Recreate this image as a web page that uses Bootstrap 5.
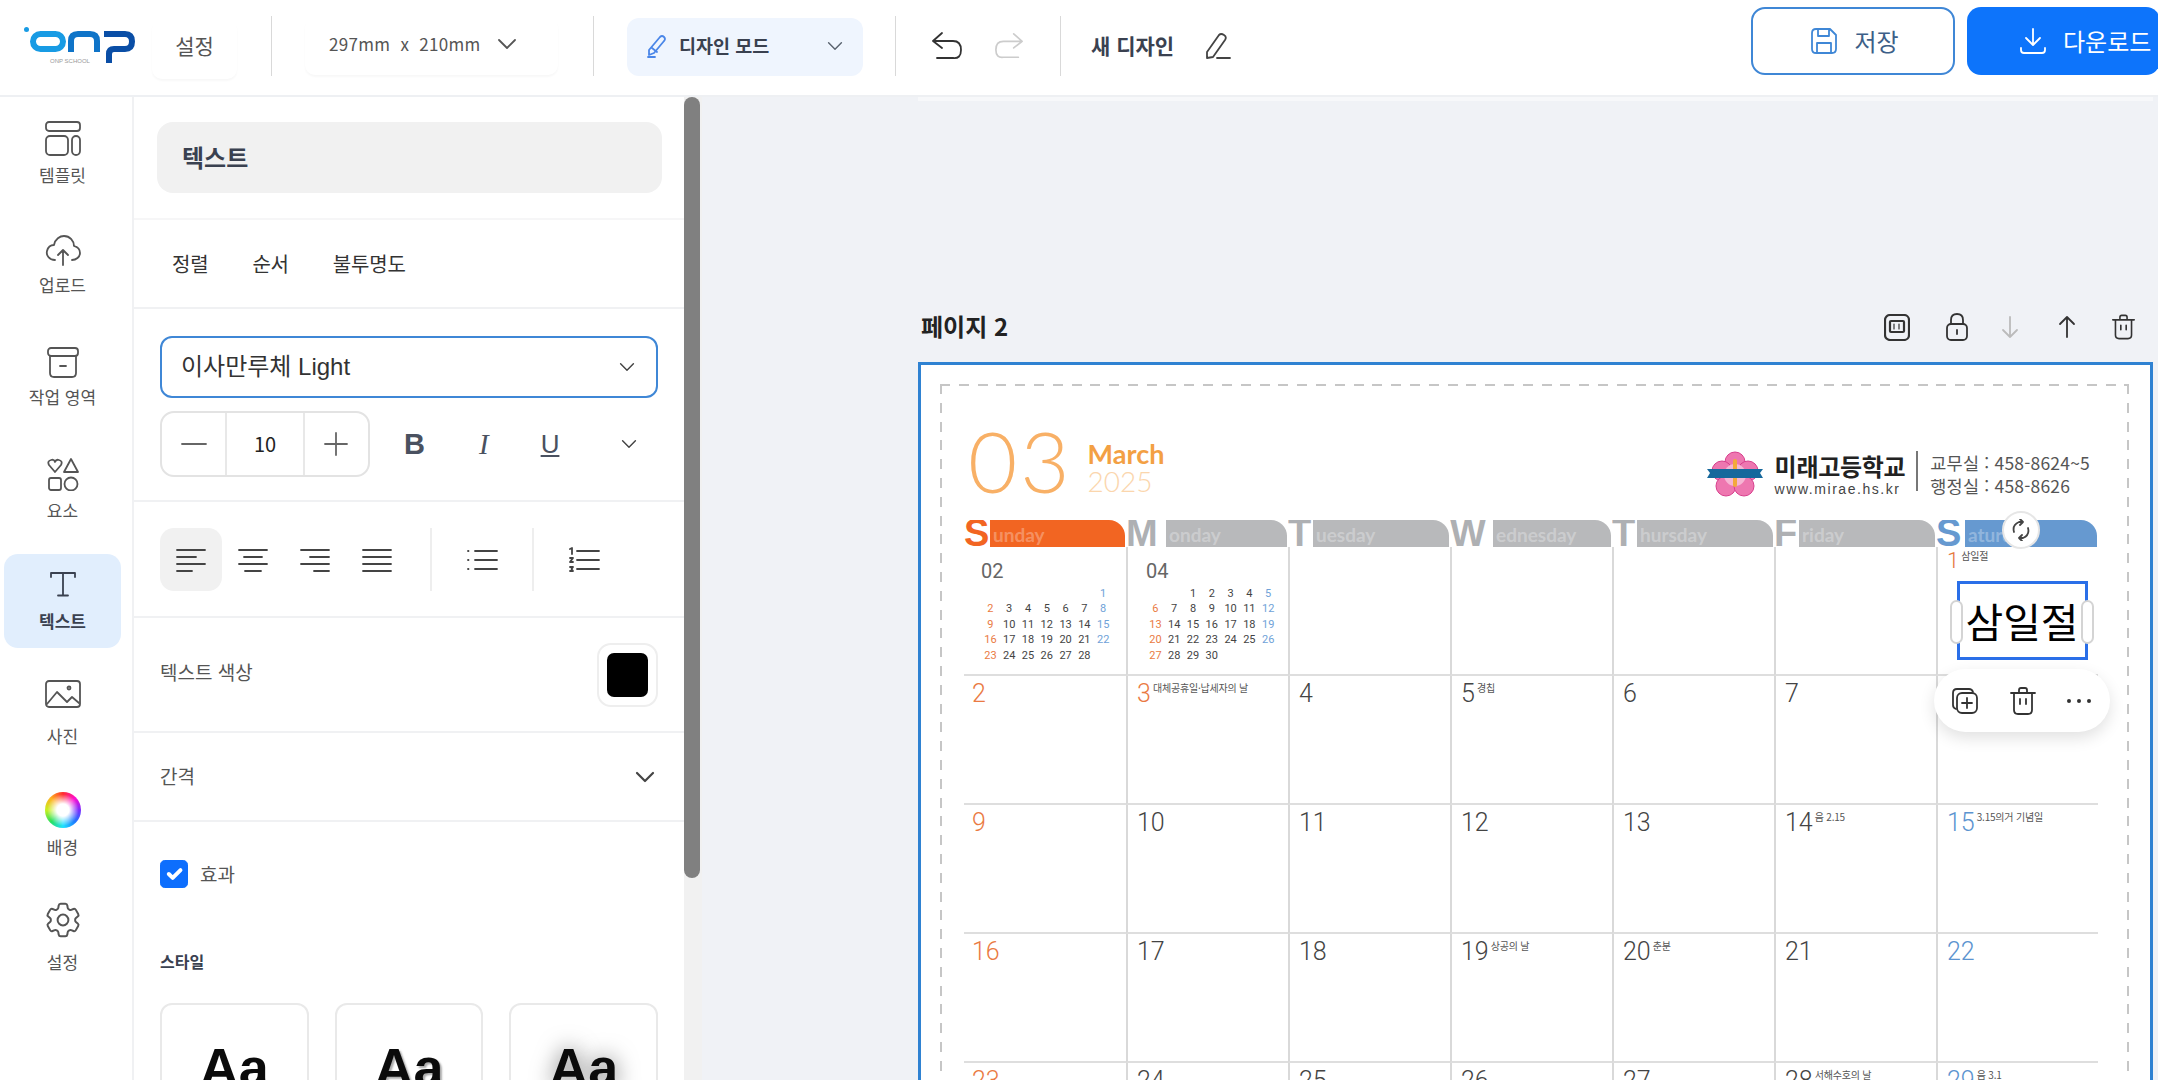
<!DOCTYPE html><html lang="ko">
<head>
  <meta charset="UTF-8" />
  <meta name="viewport" content="width=device-width, initial-scale=1.0" />
  <title>디자인 편집기</title>
  <link rel="stylesheet" href="https://cdn.jsdelivr.net/npm/bootstrap@5.3.0/dist/css/bootstrap.min.css" />
  <style>
    html, body { height: 100%; overflow: hidden; }
    body { font-family: "Noto Sans CJK KR", "Liberation Sans", sans-serif; color: #333; background: #fff; }
    svg { display: block; flex: none; }
    .ic { fill: none; stroke: currentColor; stroke-width: 1.8; stroke-linecap: round; stroke-linejoin: round; }

    /* top bar */
    .topbar { height: 97px; padding: 0 0 4px 24px; border-bottom: 2px solid #eef0f3; }
    .vline { width: 1px; height: 60px; background: #d9d9d9; flex: none; }
    .top-set { width: 85px; height: 60px; margin: 6px 34px 0 16px; padding-bottom: 6px; border-radius: 10px; box-shadow: 0 2px 2px rgba(0,0,0,.03); font-size: 21px; color: #555; }
    .top-size { width: 253px; height: 58px; margin: 0 35px 0 33px; padding: 0 0 4px 24px; border-radius: 10px; box-shadow: 0 2px 2px rgba(0,0,0,.03); font-size: 17px; color: #555; letter-spacing: .3px; }
    .top-mode { width: 236px; height: 58px; margin: 2px 32px 0 33px; padding: 0 20px 2px; border-radius: 12px; background: #eff5fe; font-size: 18.5px; font-weight: 700; color: #3a4150; }
    .top-title { margin: 0 30px 0 30px; font-size: 21px; font-weight: 700; color: #3a4150; }
    .btn-save, .btn-down { height: 68px; margin-bottom: 9px; border-radius: 14px; font-size: 24px; display: flex; align-items: center; justify-content: center; }
    .btn-save { width: 204px; margin-right: 12px; padding-left: 15px; border: 2px solid #3f87d6; color: #3d5f88; background: #fff; }
    .btn-save:hover { background: #fff; color: #3d5f88; border-color: #3f87d6; }
    .btn-down { width: 193px; margin-right: -2px; padding: 0 0 0 52px; justify-content: flex-start; background: #0d74fb; border: 0; color: #fff; white-space: nowrap; }

    /* left rail */
    .workarea { height: 983px; }
    .rail { width: 134px; border-right: 2px solid #f0f1f3; padding: 0 11px 0 4px; flex: none; }
    .rail-item { height: 112px; width: 117px; border-radius: 14px; color: #555; font-size: 17px; }
    .rail-item.on { background: #e1eefd; font-weight: 700; color: #3a4150; height: 94px; margin: 9px 0; justify-content: center; }
    .rail-item span { line-height: 22px; margin-top: 8px; white-space: nowrap; }
    .rail-item span.lab-far { margin-top: 13px; }
    .rail-item span.lab-photo { margin-top: 17px; }
    .wheel { width: 36px; height: 36px; border-radius: 50%; background: radial-gradient(circle, #fff 0 24%, rgba(255,255,255,0) 62%), conic-gradient(#ff2d2d, #ff0fd0, #7a2bff, #1d7bff, #1fe0ff, #28e060, #c8f020, #ffb020, #ff2d2d); }

    /* options panel */
    .panel { width: 550px; flex: none; overflow: hidden; }
    .sec { padding: 0 26px; border-bottom: 2px solid #f0f1f3; }
    .sec-title { height: 123px; padding: 25px 22px 0 23px; border-bottom-color: #f6f6f7; }
    .title-box { height: 71px; padding: 0 0 2px 25px; border-radius: 16px; background: #f1f1f1; font-size: 24px; font-weight: 700; color: #3a4150; }
    .sec-tabs { height: 89px; padding-left: 38px; gap: 44px; font-size: 20px; letter-spacing: -.2px; color: #333; }
    .sec-font { height: 193px; padding-top: 27px; }
    .font-pick { height: 62px; padding: 0 21px 1px 19px; border: 2px solid #3f87d6; border-radius: 12px; font-family: "Liberation Sans", "Noto Sans CJK KR", sans-serif; font-size: 24px; color: #333; }
    .font-row { margin-top: 13px; }
    .stepper { width: 210px; height: 66px; border: 2px solid #e3e3e3; border-radius: 14px; }
    .stepper > div { height: 100%; }
    .step-btn { width: 64px; color: #666; }
    .step-num { width: 80px; border-left: 2px solid #e8e8e8; border-right: 2px solid #e8e8e8; font-size: 20px; color: #222; }
    .fmt { font-family: "Liberation Serif", serif; font-size: 29px; color: #4a5160; line-height: 1; }
    .sec-align { height: 116px; padding-top: 26px; }
    .al-btn { width: 62px; height: 63px; border-radius: 14px; color: #444; }
    .al-btn.on { background: #f1f1f1; }
    .al-sep { width: 2px; height: 63px; background: #eee; }
    .sec-row { font-size: 19px; color: #555; }
    .swatch { width: 61px; height: 64px; border: 2px solid #eee; border-radius: 14px; padding: 8px; }
    .swatch div { width: 100%; height: 100%; border-radius: 7px; background: #000; }
    .fx-check { width: 28px; height: 28px; margin: 0; border-radius: 7px; }
    .style-title { font-size: 16px; font-weight: 700; color: #3a4150; margin-top: 60px; }
    .style-card { width: 149px; height: 140px; border: 2px solid #e9e9e9; border-radius: 12px; padding-top: 30px; text-align: center; font-family: "Liberation Sans", sans-serif; font-weight: 700; font-size: 54px; color: #0b0b0b; line-height: 64px; }
    .shad-a { text-shadow: 2px 2px 2px #aaa; }
    .shad-b { text-shadow: 0 0 22px #777; }
    .sbar { width: 18px; flex: none; background: #f1f1f1; }
    .sthumb { width: 16px; height: 781px; background: #808080; border-radius: 8px; }

    /* canvas */
    .canvas { background: #f0f2f6; padding-left: 216px; overflow: hidden; }
    .prev-page { height: 4px; background: #f7f8fa; width: 1235px; }
    .page-head { height: 261px; width: 1235px; padding-bottom: 21px; }
    .page-name { font-size: 24px; font-weight: 700; color: #222; margin: 0 0 -3px 3px; }
    .page-tools { gap: 33px; margin-right: 17px; color: #333; }
    .page-sheet { position: relative; width: 1235px; height: 760px; background: #fff; border: 3px solid #2f82d2; border-bottom: 0; padding: 19px 21px 0 19px; }
    .bleed {
      height: 760px; padding: 47px 31px 0 24px;
      background:
        repeating-linear-gradient(90deg, #c6c6c6 0 10px, transparent 10px 18.8px) top / 100% 2px no-repeat,
        repeating-linear-gradient(180deg, #c6c6c6 0 10px, transparent 10px 18.8px) left / 2px 100% no-repeat,
        repeating-linear-gradient(180deg, #c6c6c6 0 10px, transparent 10px 18.8px) right / 2px 100% no-repeat;
    }
    .cal-top { height: 89px; width: 1135px; }
    .big-month { font-family: "Lato", sans-serif; font-weight: 300; font-size: 85px; line-height: 66px; color: #f8b066; letter-spacing: 3px; margin: -4px 0 0 4px; }
    .en-month { font-family: "Lato", sans-serif; font-weight: 700; font-size: 27px; line-height: 27px; color: #f3a044; }
    .en-year { font-family: "Lato", sans-serif; font-weight: 300; font-size: 28px; line-height: 29px; color: #fbd6ad; }
    .sch-name { font-size: 24px; font-weight: 700; line-height: 30px; color: #222; letter-spacing: -.3px; }
    .sch-url { font-family: "Liberation Sans", sans-serif; font-size: 14px; line-height: 16px; letter-spacing: 1.55px; color: #444; }
    .sch-line { width: 2px; height: 40px; background: #777; margin: 0 12px 0 11px; }
    .sch-tel { font-size: 17.5px; line-height: 23px; color: #555; white-space: nowrap; letter-spacing: .2px; }
    .cal-grid { display: grid; grid-template-columns: repeat(7, 162px); width: 1134px; }
    .day-head { height: 27px; display: flex; overflow: hidden; position: relative; }
    .day-cap { font-family: "Liberation Sans", sans-serif; font-weight: 700; font-size: 38px; line-height: 27px; width: 1px; flex: none; color: #aeb0b3; }
    .day-bar { flex: 1; margin-right: 1px; border-top-right-radius: 16px; background: #b8b9bb; font-family: "Lato", sans-serif; font-weight: 700; font-size: 19px; line-height: 29px; padding-left: 3px; color: rgba(255,255,255,.3); }
    .cell { height: 129px; padding: 3px 9px; border-left: 2px solid #d9d9d9; border-bottom: 2px solid #dedede; overflow: hidden; color: #555; }
    .cell:nth-child(7n+1) { border-left: 0; padding-left: 8px; }
    .date-line { display: flex; gap: 2px; align-items: flex-start; }
    .num { font-family: "Roboto", sans-serif; font-weight: 300; font-size: 25px; line-height: 29px; color: #444; }
    .note { font-size: 10px; line-height: 12px; margin-top: 3px; color: #555; white-space: nowrap; letter-spacing: -.2px; }
    .sun .num { color: #ea7a43; }
    .sat .num { color: #5c94d0; }
    .mini { padding: 9px 0 0 9px; }
    .mini-m { font-family: "Roboto", sans-serif; font-weight: 400; font-size: 20px; line-height: 24px; color: #666; }
    .mini-g { display: grid; grid-template-columns: repeat(7, 18.8px); margin: 3px 0 0 0; font-family: "Roboto", sans-serif; font-size: 11px; line-height: 15.4px; text-align: center; color: #444; }
    .mini-g .s { color: #ea7a43; }
    .mini-g .b { color: #6fa2d8; }
    .sat-first { padding-top: 0; }
    .sat-first .num { font-size: 22px; line-height: 27px; color: #e57a3f; }

    /* selection overlay on the sheet */
    .sel-box { position: absolute; left: 1035.5px; top: 216px; width: 131px; height: 79px; border: 3px solid #2a6fe8; background: #fff; display: flex; align-items: center; justify-content: center; font-size: 41px; color: #000; font-weight: 400; white-space: nowrap; }
    .sel-grip { position: absolute; top: 16px; width: 13px; height: 44px; background: #fff; border: 2px solid #d4d4d4; border-radius: 7px; }
    .rot-btn { position: absolute; left: 1081px; top: 146px; width: 38px; height: 38px; background: #fff; border: 2px solid #e6e6e6; border-radius: 50%; color: #444; display: flex; align-items: center; justify-content: center; }
    .float-bar { position: absolute; left: 1013px; top: 304px; width: 176px; height: 63px; border-radius: 32px; background: #fff; box-shadow: 0 6px 16px rgba(0,0,0,.12); padding: 0 17px; color: #333; }
    .ddd { width: 4px; height: 4px; background: #333; border-radius: 50%; }
  </style>
</head>
<body>
  <svg width="0" height="0" class="position-absolute">
    <symbol id="i-trash" viewBox="0 0 28 30">
      <path d="M2 7H26M10 7V4Q10 2 12 2H16Q18 2 18 4V7M5 7V24Q5 28 9 28H19Q23 28 23 24V7M11 13V18M17 13V18" />
    </symbol>
    <symbol id="i-chev" viewBox="0 0 20 12">
      <path d="M2 2L10 10L18 2" />
    </symbol>
  </svg>

  <header class="topbar d-flex align-items-center">
    <svg width="112" height="38" viewBox="0 0 112 38" fill="none" stroke-width="6">
      <circle cx="2.5" cy="2.5" r="2.5" fill="#189be4"/>
      <rect x="9" y="7" width="30" height="15" rx="7.5" stroke="#189be4"/>
      <path d="M47 25V14Q47 7 54 7H66Q73 7 73 14V25" stroke="#0f74c8"/>
      <path d="M80 7H101Q108 7 108 14.5Q108 22 101 22H90Q85 22 85 27V36" stroke="#0a4ea6"/>
      <text x="26" y="36" font-size="6" fill="#999" stroke="none" font-family="Liberation Sans">ONP SCHOOL</text>
    </svg>
    <div class="top-set d-flex align-items-center justify-content-center">설정</div>
    <div class="vline"></div>
    <div class="top-size d-flex align-items-center">
      297mm&nbsp; x &nbsp;210mm
      <svg class="ic ms-3" width="20" height="12" style="color:#555"><use href="#i-chev"/></svg>
    </div>
    <div class="vline"></div>
    <div class="top-mode d-flex align-items-center">
      <svg class="ic" width="20" height="24" viewBox="0 0 20 24" style="color:#4a86e8"><path d="M2 16L13 3Q15 1 17 3T17 7L7 19L2 21ZM5 14L10 18M1 23H8"/></svg>
      <span class="ms-2 flex-grow-1 ps-1">디자인 모드</span>
      <svg class="ic" width="16" height="10" viewBox="0 0 20 12" style="color:#5b6470"><use href="#i-chev"/></svg>
    </div>
    <div class="vline"></div>
    <svg class="ic" style="margin-left:35px;color:#333" width="32" height="28" viewBox="0 0 32 28"><path d="M11 1L2 9L11 16M2 9H22Q30 9 30 18T22 26H6"/></svg>
    <svg class="ic" style="margin:0 36px 0 31px;color:#ccc" width="30" height="28" viewBox="0 0 32 28"><path d="M21 1L30 9L21 16M30 9H10Q2 9 2 18T10 26H26"/></svg>
    <div class="vline"></div>
    <div class="top-title">새 디자인</div>
    <svg class="ic" style="color:#444" width="27" height="28" viewBox="0 0 27 28"><path d="M3 20L15 3Q17 1 20 3T21 8L9 25L3 26ZM13 26H26"/></svg>
    <button class="btn btn-save ms-auto">
      <svg class="ic me-3" style="color:#3f87d6" width="28" height="28" viewBox="0 0 28 28"><path d="M2 6Q2 2 6 2H20L26 8V22Q26 26 22 26H6Q2 26 2 22ZM8 2V9H19V2M7 26V16H21V26"/></svg>
      저장
    </button>
    <button class="btn btn-primary btn-down">
      <svg class="ic me-3" width="28" height="28" viewBox="0 0 28 28"><path d="M14 2V17M7 11L14 18L21 11M2 21V23Q2 26 5 26H23Q26 26 26 23V21"/></svg>
      다운로드
    </button>
  </header>

  <div class="workarea d-flex">
    <nav class="rail">
      <div class="rail-item d-flex flex-column align-items-center justify-content-center">
        <svg class="ic" width="36" height="35" viewBox="0 0 36 35"><rect x="1" y="1" width="34" height="9" rx="3"/><rect x="1" y="15" width="22" height="19" rx="4"/><rect x="27" y="15" width="8" height="19" rx="4"/></svg>
        <span>템플릿</span>
      </div>
      <div class="rail-item d-flex flex-column align-items-center justify-content-center">
        <svg class="ic" width="36" height="32" viewBox="0 0 36 32"><path d="M10 26C4 26 1 21 2 17C3 13 6 11 9 11C10 5 15 2 19 2C25 2 29 7 29 12C33 13 35 16 35 19C35 23 31 26 27 26M18 31V16M13 21L18 16L23 21"/></svg>
        <span>업로드</span>
      </div>
      <div class="rail-item d-flex flex-column align-items-center justify-content-center">
        <svg class="ic" width="34" height="31" viewBox="0 0 34 31"><rect x="2" y="1" width="30" height="8" rx="3"/><path d="M4 9V26Q4 30 8 30H26Q30 30 30 26V9M14 19H20"/></svg>
        <span>작업 영역</span>
      </div>
      <div class="rail-item d-flex flex-column align-items-center justify-content-center">
        <svg class="ic" width="32" height="33" viewBox="0 0 32 33"><path d="M8 14L2 7Q0 3 4 2Q7 1 8 4Q9 1 12 2Q16 3 14 7ZM24 1L31 14H17Z"/><rect x="2" y="20" width="12" height="12" rx="2"/><circle cx="24" cy="26" r="6.5"/></svg>
        <span>요소</span>
      </div>
      <div class="rail-item on d-flex flex-column align-items-center">
        <svg class="ic" width="30" height="26" viewBox="0 0 30 26"><path d="M3 6V2H27V6M15 2V24M10 24.5H20"/></svg>
        <span class="lab-far">텍스트</span>
      </div>
      <div class="rail-item d-flex flex-column align-items-center justify-content-center">
        <svg class="ic" width="36" height="28" viewBox="0 0 36 28"><rect x="1" y="1" width="34" height="26" rx="3"/><path d="M2 24L12 12L22 22L27 17L34 23"/><circle cx="24" cy="8" r="1.5"/></svg>
        <span class="lab-photo">사진</span>
      </div>
      <div class="rail-item d-flex flex-column align-items-center justify-content-center">
        <div class="wheel"></div>
        <span>배경</span>
      </div>
      <div class="rail-item d-flex flex-column align-items-center justify-content-center">
        <svg class="ic" width="36" height="36" viewBox="2 2 20 20" style="stroke-width:1.1"><path d="M9.594 3.94c.09-.542.56-.94 1.11-.94h2.593c.55 0 1.02.398 1.11.94l.213 1.281c.063.374.313.686.645.87.074.04.147.083.22.127.324.196.72.257 1.075.124l1.217-.456a1.125 1.125 0 011.37.49l1.296 2.247a1.125 1.125 0 01-.26 1.431l-1.003.827c-.293.24-.438.613-.431.992a6.759 6.759 0 010 .255c-.007.378.138.75.43.99l1.005.828c.424.35.534.954.26 1.43l-1.298 2.247a1.125 1.125 0 01-1.369.491l-1.217-.456c-.355-.133-.75-.072-1.076.124a6.57 6.57 0 01-.22.128c-.331.183-.581.495-.644.869l-.213 1.28c-.09.543-.56.941-1.11.941h-2.594c-.55 0-1.02-.398-1.11-.94l-.213-1.281c-.062-.374-.312-.686-.644-.87a6.52 6.52 0 01-.22-.127c-.325-.196-.72-.257-1.076-.124l-1.217.456a1.125 1.125 0 01-1.369-.49l-1.297-2.247a1.125 1.125 0 01.26-1.431l1.004-.827c.292-.24.437-.613.43-.992a6.932 6.932 0 010-.255c.007-.378-.138-.75-.43-.99l-1.004-.828a1.125 1.125 0 01-.26-1.43l1.297-2.247a1.125 1.125 0 011.37-.491l1.216.456c.356.133.751.072 1.076-.124.072-.044.146-.087.22-.128.332-.183.582-.495.644-.869l.214-1.281z"/><circle cx="12" cy="12" r="3"/></svg>
        <span class="lab-far">설정</span>
      </div>
    </nav>

    <aside class="panel">
      <div class="sec sec-title">
        <div class="title-box d-flex align-items-center">텍스트</div>
      </div>
      <div class="sec sec-tabs d-flex align-items-center">
        <span>정렬</span><span>순서</span><span>불투명도</span>
      </div>
      <div class="sec sec-font">
        <div class="font-pick d-flex align-items-center justify-content-between">
          이사만루체 Light
          <svg class="ic" style="color:#444" width="16" height="10" viewBox="0 0 20 12"><use href="#i-chev"/></svg>
        </div>
        <div class="font-row d-flex align-items-center">
          <div class="stepper d-flex">
            <div class="step-btn d-flex align-items-center justify-content-center">
              <svg class="ic" width="26" height="4" viewBox="0 0 26 4"><path d="M1 2H25"/></svg>
            </div>
            <div class="step-num d-flex align-items-center justify-content-center">10</div>
            <div class="step-btn d-flex align-items-center justify-content-center">
              <svg class="ic" width="24" height="24" viewBox="0 0 24 24"><path d="M1 12H23M12 1V23"/></svg>
            </div>
          </div>
          <span class="fmt fw-bold" style="margin-left:34px;font-family:'Liberation Sans',sans-serif">B</span>
          <span class="fmt fst-italic" style="margin-left:54px">I</span>
          <span class="fmt text-decoration-underline" style="margin-left:52px;font-family:'Liberation Sans',sans-serif;font-size:26px;font-weight:300">U</span>
          <svg class="ic ms-auto" style="color:#444;margin-right:21px" width="16" height="10" viewBox="0 0 20 12"><use href="#i-chev"/></svg>
        </div>
      </div>
      <div class="sec sec-align d-flex align-items-start">
        <div class="al-btn on d-flex align-items-center justify-content-center">
          <svg class="ic" width="30" height="24" viewBox="0 0 30 24"><path d="M1 2H29M1 9H20M1 16H29M1 23H16"/></svg>
        </div>
        <div class="al-btn d-flex align-items-center justify-content-center">
          <svg class="ic" width="30" height="24" viewBox="0 0 30 24"><path d="M1 2H29M6 9H24M1 16H29M7 23H23"/></svg>
        </div>
        <div class="al-btn d-flex align-items-center justify-content-center">
          <svg class="ic" width="30" height="24" viewBox="0 0 30 24"><path d="M1 2H29M10 9H29M1 16H29M14 23H29"/></svg>
        </div>
        <div class="al-btn d-flex align-items-center justify-content-center">
          <svg class="ic" width="30" height="24" viewBox="0 0 30 24"><path d="M1 2H29M1 9H29M1 16H29M1 23H29"/></svg>
        </div>
        <div class="al-sep" style="margin-left:22px"></div>
        <div class="d-flex align-items-center justify-content-center" style="width:100px;height:63px;color:#444">
          <svg class="ic" width="32" height="24" viewBox="0 0 32 24"><path d="M9 3H31M9 12H31M9 21H31M2 3H2.5M2 12H2.5M2 21H2.5"/></svg>
        </div>
        <div class="al-sep"></div>
        <div class="d-flex align-items-center justify-content-center" style="width:100px;height:63px;color:#444">
          <svg class="ic" width="32" height="26" viewBox="0 0 32 26"><path d="M9 4H31M9 13H31M9 22H31M2 2L4 1V7M2 11H5L2 15H5M2 20H5L3.5 22L5 24H2"/></svg>
        </div>
      </div>
      <div class="sec sec-row d-flex align-items-center justify-content-between" style="height:115px">
        <span class="pb-1">텍스트 색상</span>
        <div class="swatch"><div></div></div>
      </div>
      <div class="sec sec-row d-flex align-items-center justify-content-between" style="height:89px">
        <span>간격</span>
        <svg class="ic" style="color:#444;margin-right:3px;stroke-width:2.2" width="20" height="12"><use href="#i-chev"/></svg>
      </div>
      <div style="padding:38px 26px 0">
        <div class="d-flex align-items-center gap-2 sec-row">
          <input class="form-check-input fx-check" type="checkbox" checked />
          <label class="ms-1">효과</label>
        </div>
        <div class="style-title">스타일</div>
        <div class="d-flex" style="gap:26px;margin-top:30px">
          <div class="style-card">Aa</div>
          <div class="style-card shad-a">Aa</div>
          <div class="style-card shad-b">Aa</div>
        </div>
      </div>
    </aside>
    <div class="sbar"><div class="sthumb"></div></div>

    <main class="canvas flex-grow-1">
      <div class="prev-page"></div>
      <div class="page-head d-flex align-items-end justify-content-between">
        <div class="page-name">페이지 2</div>
        <div class="page-tools d-flex align-items-center">
          <svg class="ic" style="margin-right:2px;stroke-width:2.2" width="26" height="27" viewBox="0 0 26 27"><rect x="1" y="1" width="24" height="25" rx="5"/><rect x="6" y="7" width="14" height="11" rx="1"/><path d="M10 10V15M15 10V15" style="stroke-width:1.2"/></svg>
          <svg class="ic" style="margin-right:1px" width="24" height="28" viewBox="0 0 24 28"><rect x="2" y="11" width="20" height="16" rx="4"/><path d="M6 11V7Q6 1 12 1T18 7V11M12 17V21"/></svg>
          <svg class="ic" style="color:#bbb;margin:0 6px 0 -2px" width="18" height="24" viewBox="0 0 18 24"><path d="M9 2V22M2 15L9 22L16 15"/></svg>
          <svg class="ic" style="margin-right:2px" width="18" height="24" viewBox="0 0 18 24"><path d="M9 22V2M2 9L9 2L16 9"/></svg>
          <svg class="ic" width="25" height="28" viewBox="0 0 28 30"><use href="#i-trash"/></svg>
        </div>
      </div>
      <section class="page-sheet">
        <div class="bleed">
          <div class="cal-top d-flex justify-content-between">
            <div class="d-flex align-items-start">
              <div class="big-month">03</div>
              <div style="margin:9px 0 0 15px">
                <div class="en-month">March</div>
                <div class="en-year">2025</div>
              </div>
            </div>
            <div class="d-flex align-items-start" style="margin-top:20px;margin-right:9px">
              <svg width="56" height="46" viewBox="0 0 56 46" style="margin:0 12px 0 0">
                <g fill="#ee77b0" stroke="#d83f8d" stroke-width="1">
                  <circle cx="28" cy="11" r="10"/><circle cx="15" cy="20" r="10"/><circle cx="41" cy="20" r="10"/><circle cx="19" cy="35" r="10"/><circle cx="37" cy="35" r="10"/>
                </g>
                <circle cx="28" cy="24" r="11" fill="#f6b6d4"/>
                <rect x="26" y="8" width="4" height="28" rx="2" fill="#f3a93c"/>
                <path d="M0 18H56L53 22L56 27H0L3 22Z" fill="#16689c"/>
              </svg>
              <div>
                <div class="sch-name">미래고등학교</div>
                <div class="sch-url">www.mirae.hs.kr</div>
              </div>
              <div class="sch-line"></div>
              <div class="sch-tel">교무실 : 458-8624~5<br />행정실 : 458-8626</div>
            </div>
          </div>
          <div class="cal-grid" id="cal-head"></div>
          <div class="cal-grid" id="cal-body"></div>
        </div>

        <div class="rot-btn">
          <svg class="ic" width="20" height="22" viewBox="0 0 20 22"><path d="M3 13Q1 6 8 3H12M9 0L12 3L9 6M17 9Q19 16 12 19H8M11 22L8 19L11 16"/></svg>
        </div>
        <div class="sel-box">
          <div class="sel-grip" style="left:-10px"></div>
          삼일절
          <div class="sel-grip" style="right:-9px"></div>
        </div>
        <div class="float-bar d-flex align-items-center justify-content-between">
          <svg class="ic" width="28" height="28" viewBox="0 0 28 28"><path d="M5 22Q2 21 2 18V6Q2 2 6 2H18Q21 2 22 5"/><rect x="6" y="6" width="20" height="20" rx="5"/><path d="M16 11V21M11 16H21"/></svg>
          <svg class="ic" width="28" height="30" viewBox="0 0 28 30"><use href="#i-trash"/></svg>
          <div class="d-flex" style="margin-right:2px;gap:6px">
            <div class="ddd"></div><div class="ddd"></div><div class="ddd"></div>
          </div>
        </div>
      </section>
    </main>
  </div>

  <script src="https://cdn.jsdelivr.net/npm/bootstrap@5.3.0/dist/js/bootstrap.bundle.min.js"></script>
  <script>
    // Day header strip: capital letter sits over the start of the bar
    const days = [
      ['S', 'unday', 25, '#f26522', '#f26522'],
      ['M', 'onday', 39, '#aeb0b3', '#b8b9bb'],
      ['T', 'uesday', 24, '#aeb0b3', '#b8b9bb'],
      ['W', 'ednesday', 42, '#aeb0b3', '#b8b9bb'],
      ['T', 'hursday', 24, '#aeb0b3', '#b8b9bb'],
      ['F', 'riday', 24, '#aeb0b3', '#b8b9bb'],
      ['S', 'aturday', 28, '#6699d0', '#6699d0']
    ];
    document.getElementById('cal-head').innerHTML = days.map(d => `
      <div class="day-head">
        <div class="day-cap" style="color:${d[3]}">${d[0]}</div>
        <div class="day-bar" style="background:${d[4]};margin-left:${d[2]}px">${d[1]}</div>
      </div>`).join('');

    // Small month calendars in the empty cells
    function miniCal(label, blanks, last) {
      let cells = '<span></span>'.repeat(blanks);
      for (let i = 1; i <= last; i++) {
        const col = (i + blanks - 1) % 7;
        cells += `<span class="${col === 0 ? 's' : col === 6 ? 'b' : ''}">${i}</span>`;
      }
      return `<div class="mini"><div class="mini-m">${label}</div><div class="mini-g">${cells}</div></div>`;
    }

    const notes = {
      3: '대체공휴일·납세자의 날', 5: '경칩', 14: '음 2.15', 15: '3.15의거 기념일',
      19: '상공의 날', 20: '춘분', 28: '서해수호의 날', 29: '음 3.1'
    };
    let html = `<div class="cell">${miniCal('02', 6, 28)}</div><div class="cell">${miniCal('04', 2, 30)}</div>`;
    html += '<div class="cell"></div>'.repeat(4);
    html += '<div class="cell sat-first"><div class="date-line"><span class="num">1</span><span class="note">삼일절</span></div></div>';
    for (let n = 2; n <= 30; n++) {
      const col = (n - 2) % 7;
      const tone = col === 0 ? 'sun' : col === 6 ? 'sat' : '';
      // 3월 3일 is a substitute holiday, so it is coloured like a Sunday
      const cls = n === 3 ? 'sun' : tone;
      const note = notes[n] ? `<span class="note">${notes[n]}</span>` : '';
      html += `<div class="cell ${cls}"><div class="date-line"><span class="num">${n}</span>${note}</div></div>`;
    }
    document.getElementById('cal-body').innerHTML = html;
  </script>
</body>
</html>
